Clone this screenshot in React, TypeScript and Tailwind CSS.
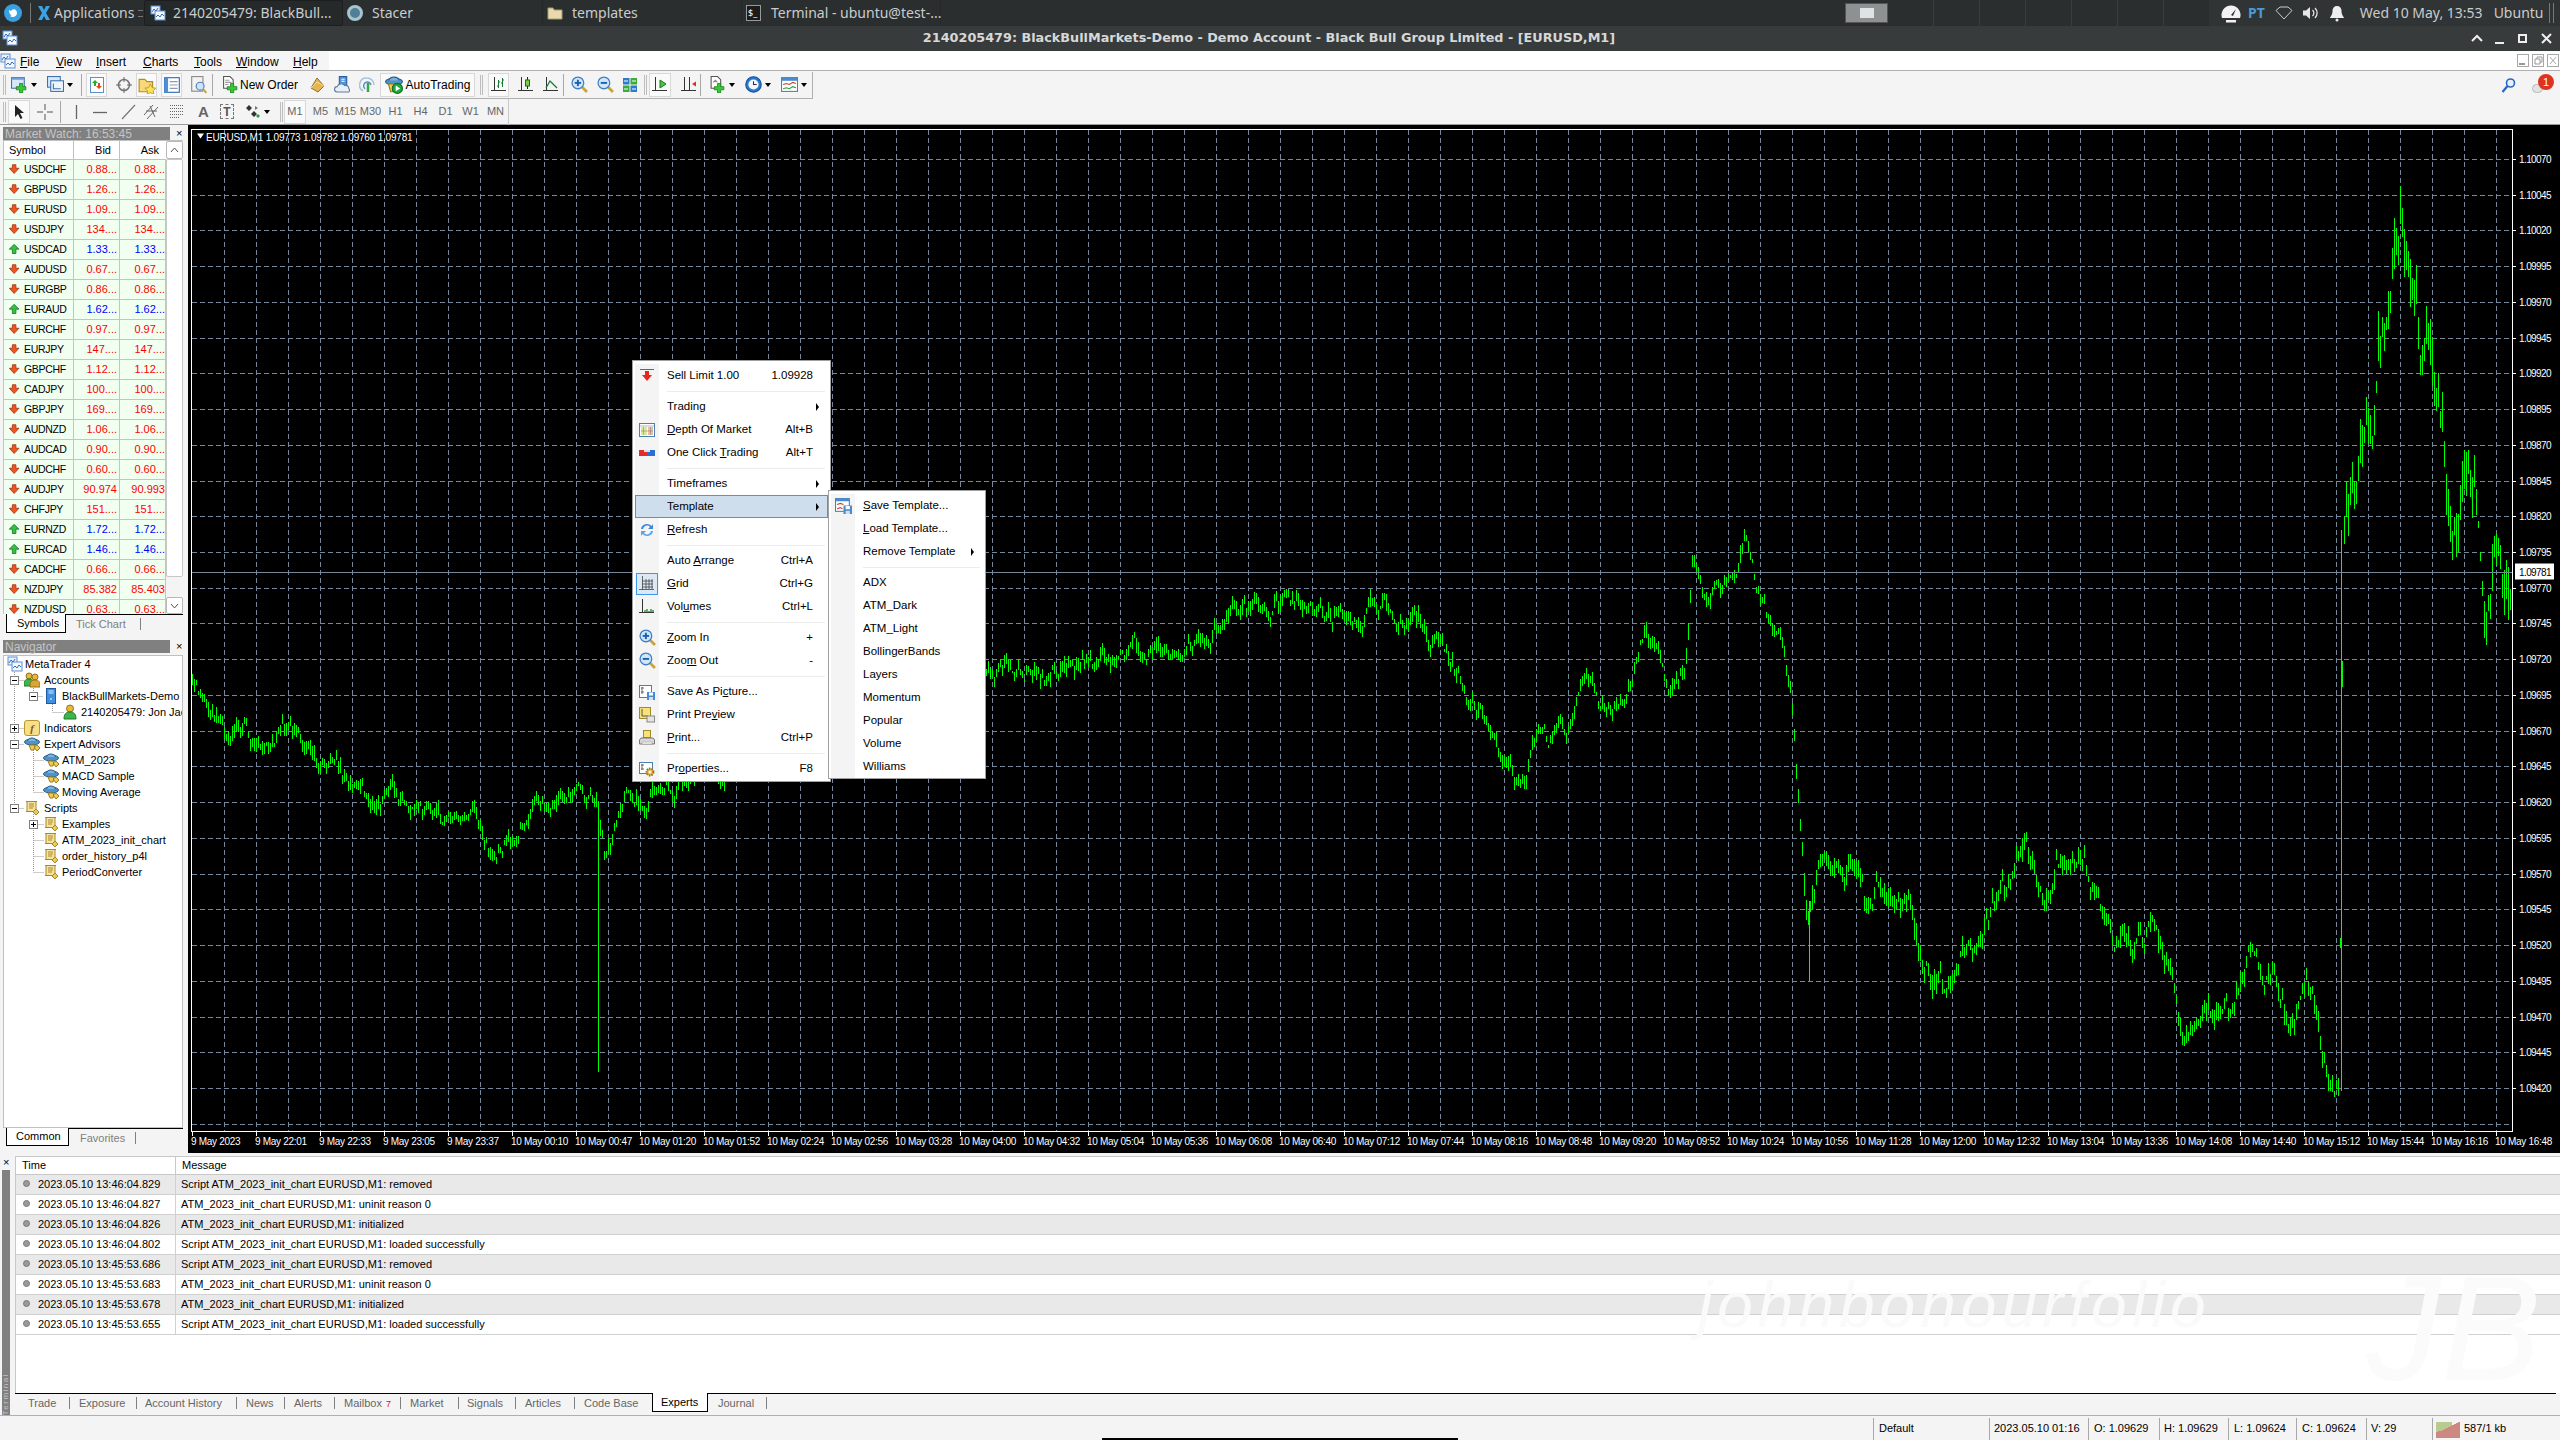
import { ReactNode } from "react";

const Svg = ({ s = 16, children }: { s?: number; children: ReactNode }) => (
  <svg width={s} height={s} viewBox="0 0 16 16" className="block shrink-0">
    {children}
  </svg>
);

const Plus = () => <path d="M8 7h3v3h3v3h-3v3H8v-3H5v-3h3z" fill="#35c935" stroke="#187a18" strokeWidth=".7" />;
const Caret = () => <span className="w-0 h-0 border-x-[3px] border-x-transparent border-t-[4px] border-t-black ml-[3px] shrink-0" />;

const MtIcon = () => (
  <Svg>
    <rect x="1" y="1" width="9" height="8" fill="#e8f1fb" stroke="#5b8fd0" />
    <rect x="5" y="6" width="10" height="9" fill="#f4f8fd" stroke="#5b8fd0" />
    <path d="M2 7l2-3 2 2 2-3M6 12l2-2 2 2 2-3 2 2" fill="none" stroke="#2d6fc0" />
  </Svg>
);
const NewChart = () => (
  <Svg s={17}>
    <rect x=".5" y="1.5" width="12" height="10" fill="#d7e7f8" stroke="#3d70b0" />
    <rect x=".5" y="1.5" width="12" height="2" fill="#6d9fd8" />
    <Plus />
  </Svg>
);
const Profiles = () => (
  <Svg s={17}>
    <rect x=".5" y=".5" width="12" height="10" fill="#d7e7f8" stroke="#3d70b0" />
    <rect x="3.5" y="4.5" width="12" height="10" fill="#eef5fc" stroke="#3d70b0" />
    <path d="M6 7v5h7" fill="none" stroke="#3d70b0" />
  </Svg>
);
const MarketIcon = () => (
  <Svg>
    <rect x="1.5" y=".5" width="13" height="15" fill="#fff" stroke="#5d8fc9" />
    <path d="M5 3l3 3H6v3H4V6H2z" fill="#21b021" transform="translate(1 0)" />
    <path d="M9 6h2v3h2l-3 3-3-3h2z" fill="#e14a1c" />
  </Svg>
);
const DataWin = () => (
  <Svg>
    <circle cx="8" cy="8" r="5.5" fill="none" stroke="#777" strokeWidth="1.6" />
    <path d="M8 0v5M8 11v5M0 8h5M11 8h5" stroke="#666" />
  </Svg>
);
const FolderStar = () => (
  <Svg s={18}>
    <path d="M1 3h5l2 2h5v9H1z" fill="#f8d878" stroke="#b98a25" />
    <path d="M11 7l1.6 3.4 3.4.4-2.5 2.4.7 3.3-3.2-1.7-3 1.7.6-3.3L6 10.800l3.400-.4z" fill="#f9e35c" stroke="#c09a1d" strokeWidth=".8" />
  </Svg>
);
const TermIcon = () => (
  <Svg s={18}>
    <rect x="1.500" y="1.500" width="13" height="13" fill="#fff" stroke="#2e6db8" />
    <rect x="1.500" y="1.500" width="3" height="13" fill="#4c8fdc" />
    <path d="M6 5h7M6 8h7M6 11h7" stroke="#8a9bb2" />
  </Svg>
);
const Tester = () => (
  <Svg s={18}>
    <rect x="1.500" y=".5" width="10" height="13" fill="#f2f2f2" stroke="#8c8c8c" />
    <circle cx="9" cy="9" r="3.500" fill="#cfe4f8" stroke="#4a7fb5" />
    <path d="M11.500 11.500l3 3.500" stroke="#c9a43a" strokeWidth="1.800" />
  </Svg>
);
const OrderDoc = () => (
  <Svg s={17}>
    <path d="M1.500.5h6l3 3v8h-9z" fill="#fff" stroke="#555" />
    <path d="M3 4h4M3 6h6M3 8h3" stroke="#999" />
    <Plus />
  </Svg>
);
const Diamond = () => (
  <Svg>
    <path d="M8 1l7 8-6 6-7-4z" fill="#e6b450" stroke="#96702a" />
    <path d="M2 11l6-6 7 4" fill="none" stroke="#f6dc94" />
  </Svg>
);
const Vps = () => (
  <Svg s={17}>
    <rect x="5" y=".5" width="7" height="10" fill="#4f93dd" stroke="#2d5e9c" />
    <path d="M7 3h3M7 5h3" stroke="#fff" />
    <path d="M3 15a2.500 2.500 0 010-5 4 4 0 017-1 3 3 0 014 3 2 2 0 010 3z" fill="#e7eff7" stroke="#5e7a99" />
  </Svg>
);
const SignalsIcon = () => (
  <Svg>
    <path d="M4 14A7 7 0 018 1a7 7 0 017 7" fill="none" stroke="#a9c3d8" strokeWidth="1.500" />
    <path d="M6 12a4 4 0 012-7 4 4 0 014 3" fill="none" stroke="#4f93c9" strokeWidth="1.500" />
    <path d="M9 6v9" stroke="#3aa63a" strokeWidth="2.500" />
  </Svg>
);
const Hat = ({ s = 16 }: { s?: number }) => (
  <Svg s={s}>
    <ellipse cx="8" cy="6" rx="7.500" ry="3" fill="#4f93c9" stroke="#2b5f8c" />
    <path d="M3.500 5C4 1 12 1 12.500 5" fill="#77b2e0" stroke="#2b5f8c" />
    <path d="M5 9h6l-1 5H7z" fill="#f0cb52" stroke="#9c7d1b" />
    <path d="M10 11l3-2 3 3-3 3z" fill="#f0cb52" stroke="#9c7d1b" />
  </Svg>
);
const AutoIcon = () => (
  <Svg s={18}>
    <ellipse cx="8" cy="5" rx="7.500" ry="3" fill="#4f93c9" stroke="#2b5f8c" />
    <path d="M3.500 4C4 0 12 0 12.500 4" fill="#77b2e0" stroke="#2b5f8c" />
    <path d="M3 7h8v7H5z" fill="#f0cb52" stroke="#9c7d1b" />
    <circle cx="11" cy="11" r="4.500" fill="#20a83a" stroke="#0f6d22" />
    <path d="M9.500 8.500l4 2.500-4 2.500z" fill="#fff" />
  </Svg>
);
const Axes = ({ children, s = 16 }: { children?: ReactNode; s?: number }) => (
  <Svg s={s}>
    <path d="M3.500 0v14M0 13.500h15" stroke="#333" fill="none" />
    {children}
  </Svg>
);
const BarsIc = () => <Axes><path d="M7.500 3v8M6 9h1.500M7.500 5H9M11.500 1v9M10 6h1.500M11.500 3H13" stroke="#167a32" fill="none" /></Axes>;
const CandleIc = () => <Axes><path d="M9.500 0v12" stroke="#222" /><rect x="7.500" y="3" width="4" height="6" fill="#7ad03a" stroke="#1b6b1b" /></Axes>;
const LineIc = () => <Axes><path d="M3 11l4-7 3 3 4 4" stroke="#167a32" fill="none" strokeWidth="1.200" /></Axes>;
const ScrollIc = () => <Axes><path d="M8 3l6 4-6 4z" fill="#3fc93f" stroke="#1b7a1b" /></Axes>;
const ShiftIc = () => <Axes><path d="M8.500 0v14" stroke="#333" /><path d="M15 4.500l-4 2.500 4 2.500z" fill="#d8301c" /></Axes>;
const Mag = ({ minus, plus }: { minus?: boolean; plus?: boolean }) => (
  <Svg s={17}>
    <path d="M9.500 9.500l5.500 5.500" stroke="#c9a43a" strokeWidth="2.600" />
    <circle cx="6.500" cy="6.500" r="5.500" fill="#cfe6fb" stroke="#3f7fc2" strokeWidth="1.200" />
    {(plus || minus) && <path d="M3.500 6.500h6" stroke="#1f5fb0" strokeWidth="1.800" />}
    {plus && <path d="M6.500 3.500v6" stroke="#1f5fb0" strokeWidth="1.800" />}
  </Svg>
);
const Tile = () => (
  <Svg>
    <rect x="1" y="1" width="6.500" height="6.500" fill="#2e7cc9" />
    <rect x="8.500" y="1" width="6.500" height="6.500" fill="#3bac3b" />
    <rect x="1" y="8.500" width="6.500" height="6.500" fill="#3bac3b" />
    <rect x="8.500" y="8.500" width="6.500" height="6.500" fill="#2e7cc9" />
    <path d="M2 4h4M10 4h4M2 12h4M10 12h4" stroke="#fff" />
  </Svg>
);
const AddInd = () => (
  <Svg s={17}>
    <path d="M2 .5h6l3 3v8H2z" fill="#fff" stroke="#555" />
    <path d="M4 6l2-2 2 2" fill="none" stroke="#888" />
    <Plus />
  </Svg>
);
const Clock = () => (
  <Svg s={17}>
    <circle cx="8" cy="8" r="7.300" fill="#2a79d0" stroke="#184f92" />
    <circle cx="8" cy="8" r="4.800" fill="#f4f8fc" />
    <path d="M8 5v3h3" stroke="#333" fill="none" />
  </Svg>
);
const TplIcon = () => (
  <Svg s={17}>
    <rect x=".5" y="1.500" width="15" height="13" fill="#fff" stroke="#4a7fb5" />
    <rect x=".5" y="1.500" width="15" height="3" fill="#4a8ad0" />
    <path d="M2 8l3-1 3 1 3-2 3 1" fill="none" stroke="#c9402a" />
    <path d="M2 12l3-1 3 1 3-2 3 1" fill="none" stroke="#2a9d3a" />
  </Svg>
);
const Cursor = () => (
  <Svg>
    <path d="M4 1v12l3-3 2.500 5 2-1-2.500-5h4z" fill="#222" />
  </Svg>
);
const Cross = () => (
  <Svg>
    <path d="M8 0v6M8 10v6M0 8h6M10 8h6" stroke="#555" />
  </Svg>
);
const VLine = () => <Svg><path d="M8.500 1v14" stroke="#666" strokeWidth="1.300" /></Svg>;
const HLine = () => <Svg><path d="M1 8.500h14" stroke="#666" strokeWidth="1.300" /></Svg>;
const Trend = () => <Svg><path d="M2 15L15 1" stroke="#777" strokeWidth="1.200" /></Svg>;
const Channel = () => (
  <Svg>
    <path d="M0 11L9 1M3 15L14 3M6 2l5 11M2 7h11" stroke="#666" fill="none" />
  </Svg>
);
const Fibo = () => (
  <Svg>
    <path d="M1 1.500h14M1 4.500h14M1 7.500h14M1 10.500h14M1 13.500h10" stroke="#666" strokeDasharray="1 1" />
  </Svg>
);
const Shapes = () => (
  <Svg>
    <path d="M4 1l3 3-3 3-3-3zM9 7l3 3-3 3-3-3z" fill="#333" />
    <path d="M13 10l2 2-2 2-2-2z" fill="#2a9d3a" />
    <path d="M10 2l3 2-3 2z" fill="#777" />
  </Svg>
);
const DownArrow = () => (
  <Svg s={14}>
    <path d="M5 2h4v4h3.500L7 12 1.500 6H5z" fill="#f0551f" stroke="#a8381a" />
  </Svg>
);
const UpArrow = () => (
  <Svg s={14}>
    <path d="M5 12h4V7h3.500L7 1.500 1.500 7H5z" fill="#34c046" stroke="#1c7d2a" />
  </Svg>
);
const SellIc = () => (
  <Svg>
    <path d="M1 1.500h14" stroke="#666" />
    <path d="M6 3h4v4h3l-5 6-5-6h3z" fill="#e8271c" />
  </Svg>
);
const DepthIc = () => (
  <Svg>
    <rect x=".5" y="1.500" width="15" height="13" fill="#fff" stroke="#4a7fb5" />
    <rect x="2" y="5" width="6" height="8" fill="#d9e89a" />
    <rect x="9" y="5" width="5" height="8" fill="#f2b9a8" />
    <path d="M1 4h14M4.500 5v8M11.500 5v8M2 9h12" stroke="#888" strokeWidth=".6" />
  </Svg>
);
const ClickIc = () => (
  <Svg>
    <rect x="0" y="5" width="8" height="6" fill="#e02c2c" />
    <rect x="8" y="5" width="8" height="6" fill="#2c6fd0" />
    <rect x="5" y="5" width="6" height="2" fill="#ddd" />
  </Svg>
);
const RefreshIc = () => (
  <Svg>
    <path d="M2 7a6 5.500 0 0110.500-3L14 2v5H9l2-2A4 4 0 004 7z" fill="#3b8ad8" />
    <path d="M14 9a6 5.500 0 01-10.500 3L2 14V9h5l-2 2a4 4 0 007-2z" fill="#5ba4e6" />
  </Svg>
);
const GridIc = () => (
  <Svg>
    <path d="M3.500 0v14M0 13.500h15M7 3v10M10 3v10M13 3v10M3 5h11M3 8h11M3 11h11" stroke="#444" fill="none" strokeWidth=".8" />
  </Svg>
);
const VolIc = () => <Axes><path d="M6 13v-2M8 13v-3M10 13v-1M12 13v-3M14 13v-2" stroke="#2a9d3a" strokeWidth="1.500" /></Axes>;
const Floppy = () => (
  <g>
    <rect x="8" y="8" width="8" height="8" fill="#4a8ad0" />
    <rect x="10" y="8.500" width="4" height="3" fill="#fff" />
    <rect x="10" y="13" width="4" height="3" fill="#cfe0f2" />
  </g>
);
const SavePicIc = () => (
  <Svg>
    <rect x=".5" y="1.500" width="12" height="12" fill="#fff" stroke="#4a7fb5" />
    <path d="M3 3v7M5 4H2M2 8h3" stroke="#666" />
    <Floppy />
  </Svg>
);
const PreviewIc = () => (
  <Svg>
    <rect x=".5" y=".5" width="11" height="11" fill="#f5e37a" stroke="#a08a2a" />
    <path d="M3 2v7h6" stroke="#555" fill="none" />
    <rect x="8" y="9" width="7.500" height="6" fill="#e4e4e4" stroke="#888" />
  </Svg>
);
const PrintIc = () => (
  <Svg>
    <rect x="4.500" y=".5" width="7" height="7" fill="#f5e37a" stroke="#a08a2a" />
    <path d="M2 8h12l1.500 2v4H.5v-4z" fill="#d8d8d8" stroke="#777" />
    <rect x="3" y="12" width="10" height="2" fill="#f7f7f7" stroke="#999" strokeWidth=".5" />
  </Svg>
);
const PropsIc = () => (
  <Svg>
    <rect x=".5" y="1.500" width="13" height="11" fill="#fff" stroke="#4a7fb5" />
    <path d="M3 3v6M2 4h3M2 8h3" stroke="#666" />
    <circle cx="11" cy="11" r="3.500" fill="#e2b040" stroke="#94701e" strokeWidth="1.800" strokeDasharray="1.500 1" />
    <circle cx="11" cy="11" r="1.500" fill="#fff6d0" />
  </Svg>
);
const SaveTplIc = () => (
  <Svg s={17}>
    <rect x=".5" y="1.500" width="13" height="12" fill="#fff" stroke="#4a7fb5" />
    <rect x=".5" y="1.500" width="13" height="2.500" fill="#4a8ad0" />
    <path d="M2 7l3-1 3 1M2 11l3-1 2 1" fill="none" stroke="#c9402a" />
    <Floppy />
  </Svg>
);
const UserIc = () => (
  <Svg>
    <circle cx="8" cy="4.500" r="3.500" fill="#e8b838" stroke="#94701e" />
    <path d="M2 15c0-5 2-7 6-7s6 2 6 7z" fill="#3eb54a" stroke="#1d7a2a" />
  </Svg>
);
const AccountsIc = () => (
  <Svg>
    <circle cx="5" cy="4" r="3" fill="#e8b838" stroke="#94701e" />
    <path d="M0 14c0-5 1-7 5-7s5 2 5 7z" fill="#3eb54a" stroke="#1d7a2a" />
    <circle cx="11" cy="5" r="3" fill="#e8b838" stroke="#94701e" />
    <path d="M6 15c0-5 1-7 5-7s5 2 5 7z" fill="#d9a62e" stroke="#94701e" />
  </Svg>
);
const ServerIc = () => (
  <Svg>
    <rect x="3.500" y=".5" width="9" height="15" fill="#3f8fe0" stroke="#1f5a9c" />
    <path d="M5.500 3h5M5.500 5h5" stroke="#d8ecff" />
    <circle cx="8" cy="11" r="1" fill="#bfe0ff" />
  </Svg>
);
const IndIc = () => (
  <span className="w-4 h-4 rounded-[3px] bg-[#f7df8a] border border-[#b9952f] flex items-center justify-center text-[11px] italic font-bold text-[#8a5a10] font-['Liberation_Serif',serif] shrink-0">f</span>
);
const ScriptIc = () => (
  <Svg>
    <path d="M3 1.500h9v10H3z" fill="#f6e49a" stroke="#a8882a" />
    <path d="M2 1.500h11M2 11.500h8M5 4h5M5 6h5M5 8h4" stroke="#a8882a" fill="none" />
    <path d="M12 9l3 3-3 3-3-3z" fill="#e8c860" stroke="#a8882a" />
  </Svg>
);

const rows: [string, string, string, boolean][] = [
  ["USDCHF", "0.88...", "0.88...", false],
  ["GBPUSD", "1.26...", "1.26...", false],
  ["EURUSD", "1.09...", "1.09...", false],
  ["USDJPY", "134....", "134....", false],
  ["USDCAD", "1.33...", "1.33...", true],
  ["AUDUSD", "0.67...", "0.67...", false],
  ["EURGBP", "0.86...", "0.86...", false],
  ["EURAUD", "1.62...", "1.62...", true],
  ["EURCHF", "0.97...", "0.97...", false],
  ["EURJPY", "147....", "147....", false],
  ["GBPCHF", "1.12...", "1.12...", false],
  ["CADJPY", "100....", "100....", false],
  ["GBPJPY", "169....", "169....", false],
  ["AUDNZD", "1.06...", "1.06...", false],
  ["AUDCAD", "0.90...", "0.90...", false],
  ["AUDCHF", "0.60...", "0.60...", false],
  ["AUDJPY", "90.974", "90.993", false],
  ["CHFJPY", "151....", "151....", false],
  ["EURNZD", "1.72...", "1.72...", true],
  ["EURCAD", "1.46...", "1.46...", true],
  ["CADCHF", "0.66...", "0.66...", false],
  ["NZDJPY", "85.382", "85.403", false],
  ["NZDUSD", "0.63...", "0.63...", false],
];

// mid price of the chart, read off the reference
const curve: [number, number][] = [
  [192, 678], [207, 694], [229, 727], [253, 743], [278, 727], [310, 751], [335, 767], [359, 800], [392, 795], [433, 812],
  [474, 825], [498, 849], [522, 816], [563, 800], [596, 795], [604, 841], [629, 800], [800, 735], [980, 670], [996, 669],
  [1045, 669], [1094, 653], [1143, 645], [1192, 634], [1225, 620], [1290, 604], [1331, 617], [1380, 601], [1421, 629],
  [1453, 661], [1486, 720], [1500, 766], [1520, 790], [1533, 749], [1565, 741], [1585, 692], [1611, 713], [1643, 639],
  [1669, 684], [1685, 655], [1692, 562], [1708, 606], [1747, 549], [1760, 606], [1780, 647], [1790, 709], [1799, 806],
  [1806, 908], [1825, 868], [1842, 860], [1855, 868], [1864, 904], [1877, 872], [1890, 909], [1910, 896], [1923, 953],
  [1942, 986], [1962, 962], [1988, 913], [2014, 900], [2020, 872], [2050, 888], [2056, 855], [2089, 872], [2102, 925],
  [2112, 941], [2128, 921], [2157, 925], [2177, 1002], [2183, 1023], [2206, 1006], [2229, 1015], [2248, 966], [2264, 990],
  [2274, 962], [2284, 1006], [2307, 982], [2323, 1051], [2330, 1080], [2339, 1072], [2343, 497], [2355, 480], [2360, 430],
  [2367, 357], [2373, 380], [2383, 290], [2393, 215], [2400, 195], [2410, 270], [2420, 370], [2430, 313], [2440, 397],
  [2447, 463], [2453, 530], [2463, 480], [2477, 490], [2483, 590], [2490, 600], [2496, 520], [2503, 540], [2510, 570],
];

function buildBars() {
  let seed = 20230510;
  const rnd = () => {
    seed = (seed * 1664525 + 1013904223) % 4294967296;
    return seed / 4294967296;
  };
  let d = "";
  let i = 0;
  let walk = 0;
  for (let x = 192; x <= 2510; x += 2) {
    while (i < curve.length - 2 && curve[i + 1][0] < x) i++;
    const [x0, y0] = curve[i];
    const [x1, y1] = curve[i + 1];
    const mid = y0 + ((y1 - y0) * (x - x0)) / (x1 - x0);
    const amp = x < 1790 ? 9 : x < 2341 ? 12 : 28;
    walk = walk * 0.82 + (rnd() - 0.5) * amp * 1.9;
    const hi = mid + walk - amp * (0.1 + rnd() * 0.9);
    const lo = mid + walk + amp * (0.1 + rnd() * 0.9);
    d += `M${x + 0.5} ${Math.max(129, hi).toFixed(0)}V${Math.min(1129, lo).toFixed(0)}`;
  }
  d += "M598.500 800V1071M1809.500 900V980M2341.500 529V1090";
  return d;
}
const bars = buildBars();

const hLines = Array.from({ length: 28 }, (_, k) => Math.round(158 + 35.73 * k));
const vLines = Array.from({ length: 72 }, (_, k) => 224 + 32 * k);
const times = [
  "9 May 2023", "9 May 22:01", "9 May 22:33", "9 May 23:05", "9 May 23:37", "10 May 00:10", "10 May 00:47", "10 May 01:20",
  "10 May 01:52", "10 May 02:24", "10 May 02:56", "10 May 03:28", "10 May 04:00", "10 May 04:32", "10 May 05:04", "10 May 05:36",
  "10 May 06:08", "10 May 06:40", "10 May 07:12", "10 May 07:44", "10 May 08:16", "10 May 08:48", "10 May 09:20", "10 May 09:52",
  "10 May 10:24", "10 May 10:56", "10 May 11:28", "10 May 12:00", "10 May 12:32", "10 May 13:04", "10 May 13:36", "10 May 14:08",
  "10 May 14:40", "10 May 15:12", "10 May 15:44", "10 May 16:16", "10 May 16:48",
];

function Chart() {
  return (
    <svg viewBox="188 125 2372 1027" className="block w-full h-full bg-black" fontFamily="'Liberation Sans', sans-serif" fontSize="10" fill="#fff">
      <g stroke="#77889b" strokeDasharray="5 3" shapeRendering="crispEdges">
        {hLines.map((y) => <line key={y} x1="192" x2="2512" y1={y + 0.5} y2={y + 0.5} />)}
        {vLines.map((x) => <line key={x} x1={x + 0.5} x2={x + 0.5} y1="129" y2="1130" />)}
      </g>
      <path d={bars} stroke="#00ff00" strokeWidth="1" fill="none" shapeRendering="crispEdges" />
      <line x1="192" x2="2512" y1="571.500" y2="571.500" stroke="#778899" shapeRendering="crispEdges" />
      <path d="M191.500 128.500H2512.500V1130.500H191.500z" fill="none" stroke="#fff" shapeRendering="crispEdges" />
      <path d="M197 133h7l-3.500 5z" fill="#fff" />
      <text x="206" y="140" letterSpacing="-.2">EURUSD,M1  1.09773 1.09782 1.09760 1.09781</text>
      {hLines.slice(0, 27).map((y, k) => (
        <g key={y}>
          <line x1="2512" x2="2516" y1={y + 0.5} y2={y + 0.5} stroke="#fff" shapeRendering="crispEdges" />
          <text x="2519" y={y + 4} letterSpacing="-.6">{(1.1007 - 0.00025 * k).toFixed(5)}</text>
        </g>
      ))}
      <rect x="2515" y="563" width="39" height="16" fill="#fff" />
      <text x="2519" y="575" fill="#000" letterSpacing="-.6">1.09781</text>
      {times.map((t, k) => (
        <g key={t}>
          <line x1={192.5 + 64 * k} x2={192.5 + 64 * k} y1="1130" y2="1135" stroke="#fff" shapeRendering="crispEdges" />
          <text x={191 + 64 * k} y="1144" letterSpacing="-.3">{t}</text>
        </g>
      ))}
    </svg>
  );
}

function Mi({ label, u, shortcut, icon, sub, active, box }: { label: string; u?: number; shortcut?: string; icon?: ReactNode; sub?: boolean; active?: boolean; box?: boolean }) {
  return (
    <div className={`relative flex items-center h-[23px] ${active ? "bg-[#cfdeec] outline outline-1 -outline-offset-1 outline-[#3b9aef]" : ""}`}>
      <div className={`flex items-center justify-center w-[24px] h-[23px] shrink-0 ${active ? "" : "bg-[#f4f4f4]"}`}>
        <div className={box ? "border border-[#3b9aef] bg-[#dce8f3] p-[2px]" : ""}>{icon}</div>
      </div>
      <span className="pl-[8px] whitespace-pre">
        {u === undefined ? label : <>{label.slice(0, u)}<span className="underline">{label[u]}</span>{label.slice(u + 1)}</>}
      </span>
      {shortcut && <span className="absolute right-[15px]">{shortcut}</span>}
      {sub && <span className="absolute right-[9px] w-0 h-0 border-y-[4px] border-y-transparent border-l-[3px] border-l-black" />}
    </div>
  );
}
const MSep = () => (
  <div className="h-[8px] flex items-center">
    <div className="w-[24px] h-full bg-[#f4f4f4]" />
    <div className="flex-1 ml-[8px] mr-[3px] h-px bg-[#ececec]" />
  </div>
);

function TreeRow({ pl, box, icon, children }: { pl: string; box?: "+" | "-"; icon: ReactNode; children: ReactNode }) {
  return (
    <div className={`flex items-center h-4 whitespace-nowrap ${pl}`}>
      <span className="w-[9px] h-[9px] shrink-0">
        {box && (
          <svg width="9" height="9" viewBox="0 0 9 9" className="block">
            <rect x=".5" y=".5" width="8" height="8" fill="#fff" stroke="#808080" />
            <path d={box === "+" ? "M2 4.500h5M4.500 2v5" : "M2 4.500h5"} stroke="#000" />
          </svg>
        )}
      </span>
      <span className="ml-[5px] shrink-0">{icon}</span>
      <span className="ml-[3px]">{children}</span>
    </div>
  );
}

const tabs: [string, string][] = [
  ["Trade", "w-[55px] pl-[13px]"],
  ["Exposure", "w-[67px] pl-[9px]"],
  ["Account History", "w-[100px] pl-[8px]"],
  ["News", "w-[48px] pl-[9px]"],
  ["Alerts", "w-[50px] pl-[9px]"],
  ["Mailbox", "w-[66px] pl-[9px]"],
  ["Market", "w-[58px] pl-[9px]"],
  ["Signals", "w-[57px] pl-[8px]"],
  ["Articles", "w-[59px] pl-[9px]"],
  ["Code Base", "w-[77px] pl-[9px]"],
];

const logs: [string, string][] = [
  ["2023.05.10 13:46:04.829", "Script ATM_2023_init_chart EURUSD,M1: removed"],
  ["2023.05.10 13:46:04.827", "ATM_2023_init_chart EURUSD,M1: uninit reason 0"],
  ["2023.05.10 13:46:04.826", "ATM_2023_init_chart EURUSD,M1: initialized"],
  ["2023.05.10 13:46:04.802", "Script ATM_2023_init_chart EURUSD,M1: loaded successfully"],
  ["2023.05.10 13:45:53.686", "Script ATM_2023_init_chart EURUSD,M1: removed"],
  ["2023.05.10 13:45:53.683", "ATM_2023_init_chart EURUSD,M1: uninit reason 0"],
  ["2023.05.10 13:45:53.678", "ATM_2023_init_chart EURUSD,M1: initialized"],
  ["2023.05.10 13:45:53.655", "Script ATM_2023_init_chart EURUSD,M1: loaded successfully"],
];

const Pressed = ({ className, children }: { className: string; children: ReactNode }) => (
  <div className={`h-[24px] flex items-center justify-center bg-[#fafafa] border border-[#d8d8d8] shrink-0 ${className}`}>{children}</div>
);
const Slot = ({ className, children }: { className: string; children: ReactNode }) => (
  <div className={`h-[24px] flex items-center shrink-0 ${className}`}>{children}</div>
);
const Sep = ({ className }: { className: string }) => <div className={`w-px h-[22px] bg-[#a8a8a8] shrink-0 ${className}`} />;
const Grip = ({ className }: { className: string }) => <div className={`w-[3px] h-[20px] border-x border-[#bdbdbd] shrink-0 ${className}`} />;

const menuUnderlines = [
  ["File", "w-[36px]"],
  ["View", "w-[40px]"],
  ["Insert", "w-[47px]"],
  ["Charts", "w-[51px]"],
  ["Tools", "w-[42px]"],
  ["Window", "w-[57px]"],
  ["Help", "w-[35px]"],
];

const statusCells: [string, string][] = [
  ["Default", "w-[116px] pl-[5px]"],
  ["2023.05.10 01:16", "w-[99px] pl-[4px]"],
  ["O: 1.09629", "w-[71px] pl-[5px]"],
  ["H: 1.09629", "w-[69px] pl-[4px]"],
  ["L: 1.09624", "w-[68px] pl-[5px]"],
  ["C: 1.09624", "w-[70px] pl-[5px]"],
  ["V: 29", "w-[66px] pl-[4px]"],
];

export default function App() {
  return (
    <div className="relative w-[2560px] h-[1440px] overflow-hidden flex flex-col bg-[#f4f4f4] text-black text-[11px] leading-none font-['Liberation_Sans',sans-serif]">
      {/* desktop panel */}
      <div className="h-[26px] bg-[#2b2e2f] flex items-center text-[14px] text-[#c9cccc] shrink-0 font-['Noto_Sans',sans-serif]">
        <svg width="18" height="18" viewBox="0 0 18 18" className="ml-[4px] shrink-0">
          <circle cx="9" cy="9" r="9" fill="#3aa0e0" />
          <path d="M5 6l2 1c2-3 6-2 6 2s-5 5-7 3l2-1c-2 0-3-2-3-5z" fill="#fff" />
        </svg>
        <div className="w-px h-[20px] bg-[#777] ml-[8px] shrink-0" />
        <svg width="14" height="16" viewBox="0 0 14 16" className="ml-[6px] shrink-0">
          <path d="M1 1l4 0 2 4 2-4 4 0-4 7 4 7-4 0-2-4-2 4-4 0 4-7z" fill="#39a3e6" />
        </svg>
        <span className="ml-[3px] w-[84px]">Applications</span>
        <span className="w-[5px] h-[7px] border-y border-[#777] shrink-0" />
        <div className="ml-[1px] w-[199px] h-[26px] bg-[#26292a] border border-[#1c1e1f] rounded-[2px] flex items-center">
          <span className="ml-[5px]"><MtIcon /></span>
          <span className="ml-[7px] whitespace-nowrap">2140205479: BlackBull...</span>
        </div>
        <div className="w-[200px] h-[26px] border-r border-[#262829] flex items-center">
          <span className="ml-[4px] w-4 h-4 rounded-full bg-[#4f7f96] border-[3px] border-[#a9c4cf] shrink-0" />
          <span className="ml-[9px]">Stacer</span>
        </div>
        <div className="w-[199px] h-[26px] border-r border-[#262829] flex items-center">
          <svg width="16" height="16" viewBox="0 0 16 16" className="ml-[4px] shrink-0">
            <path d="M1 3h5l1 2h8v9H1z" fill="#e8d9ae" stroke="#a89a70" />
          </svg>
          <span className="ml-[9px]">templates</span>
        </div>
        <div className="w-[199px] h-[26px] border-r border-[#262829] flex items-center">
          <span className="ml-[4px] w-[15px] h-[16px] bg-[#1b1b1b] border border-[#999] text-[9px] text-white leading-[13px] pl-px shrink-0">$_</span>
          <span className="ml-[10px] whitespace-nowrap">Terminal - ubuntu@test-...</span>
        </div>
        <div className="ml-[904px] w-[43px] h-[20px] bg-[#8e9192] border border-[#555] flex items-center justify-center shrink-0">
          <div className="w-[14px] h-[10px] bg-[#dfe3e6]" />
        </div>
        <div className="w-[321px] h-[26px] shrink-0 flex">
          {[0, 1, 2, 3, 4, 5].map((k) => <div key={k} className="w-[46px] h-[26px] border-r border-[#3a3d3e]" />)}
        </div>
        <div className="flex-1 h-[26px] bg-[#303435] flex items-center">
          <svg width="22" height="22" viewBox="0 0 22 22" className="ml-[11px] shrink-0">
            <path d="M2 16A9.500 9.500 0 1120 16z" fill="#f2f2f2" />
            <path d="M11 13l5-6-3 7z" fill="#303435" />
            <rect x="6" y="18" width="10" height="2.500" fill="#f2f2f2" />
          </svg>
          <span className="ml-[6px] font-bold text-[#4a9ad8]">PT</span>
          <svg width="18" height="14" viewBox="0 0 18 14" className="ml-[10px] shrink-0">
            <path d="M1 4.500L5 1h8l4 3.500L9 13z" fill="none" stroke="#c9cccc" />
          </svg>
          <svg width="17" height="16" viewBox="0 0 17 16" className="ml-[9px] shrink-0">
            <path d="M1 5.500h3L8 2v12l-4-3.500H1z" fill="#e6e6e6" />
            <path d="M10.500 5a4 4 0 010 6M13 3a7 7 0 010 10" fill="none" stroke="#e6e6e6" strokeWidth="1.300" />
          </svg>
          <svg width="14" height="17" viewBox="0 0 14 17" className="ml-[11px] shrink-0">
            <path d="M7 1a4.500 4.500 0 014.500 5c0 4 2.500 6 2.500 7H0c0-1 2.500-3 2.500-7A4.500 4.500 0 017 1z" fill="#eee" />
            <circle cx="7" cy="15" r="1.500" fill="#eee" />
          </svg>
          <span className="ml-[16px] whitespace-nowrap">Wed 10 May, 13:53</span>
          <span className="ml-[11px]">Ubuntu</span>
          <div className="ml-[5px] w-[5px] h-[20px] border-x border-[#777]" />
        </div>
      </div>

      {/* window title */}
      <div className="relative h-[25px] bg-[#383b3c] flex items-center justify-center pr-[22px] shrink-0 text-[12.800px] font-bold text-[#d6d8d8] font-['DejaVu_Sans',sans-serif]">
        <span className="absolute left-[2px] top-[4px]"><MtIcon /></span>
        <span className="whitespace-nowrap">2140205479: BlackBullMarkets-Demo - Demo Account - Black Bull Group Limited - [EURUSD,M1]</span>
        <svg width="90" height="14" viewBox="0 0 90 14" className="absolute right-[2px] top-[6px]">
          <path d="M4 9l5-5 5 5" fill="none" stroke="#eee" strokeWidth="2" />
          <path d="M27 11h9" stroke="#eee" strokeWidth="2" />
          <rect x="51" y="3" width="7" height="7" fill="none" stroke="#eee" strokeWidth="2" />
          <path d="M74 2l9 9M83 2l-9 9" stroke="#eee" strokeWidth="2" />
        </svg>
      </div>

      {/* menu bar */}
      <div className="h-[20px] bg-white border-b border-[#b0b0b0] flex items-center shrink-0">
        <div className="w-[329px] h-[19px] bg-[#f5f5f5] flex items-center">
          <span className="w-[20px]"><MtIcon /></span>
          {menuUnderlines.map(([m, w]) => (
            <span key={m} className={`text-[12px] pt-[2px] ${w}`}><span className="underline">{m[0]}</span>{m.slice(1)}</span>
          ))}
        </div>
        <div className="ml-auto flex mr-[1px] gap-[3px] text-[#8c8c8c]">
          {["min", "max", "close"].map((k) => (
            <svg key={k} width="12" height="13" viewBox="0 0 12 13" className="block">
              <rect x=".5" y=".5" width="11" height="12" fill="#fff" stroke="#a8a8a8" />
              {k === "min" && <path d="M2 10h6" stroke="#999" strokeWidth="2" />}
              {k === "max" && <path d="M3 5h5v5H3zM5 5V3h5v5H8" fill="none" stroke="#999" />}
              {k === "close" && <path d="M3 3l6 7M9 3l-6 7" stroke="#aaa" />}
            </svg>
          ))}
        </div>
      </div>

      {/* main toolbar */}
      <div className="relative h-[27px] flex items-center shrink-0 pt-px">
        <div className="flex items-center w-[813px] h-[27px] border-r border-b border-[#b0b0b0]">
          <Grip className="ml-[3px] -mr-[6px]" />
          <Slot className="ml-[11px] w-[27px]"><NewChart /><Caret /></Slot>
          <Slot className="ml-[9px] w-[27px]"><Profiles /><Caret /></Slot>
          <Sep className="ml-[7px]" />
          <Pressed className="ml-[4px] w-[21px]"><MarketIcon /></Pressed>
          <Slot className="ml-[9px] w-[16px]"><DataWin /></Slot>
          <Pressed className="ml-[4px] w-[21px]"><FolderStar /></Pressed>
          <Pressed className="ml-[4px] w-[21px]"><TermIcon /></Pressed>
          <Slot className="ml-[8px] w-[18px]"><Tester /></Slot>
          <Sep className="ml-[4px]" />
          <Slot className="ml-[9px] w-[70px] text-[12px] whitespace-nowrap"><OrderDoc /><span className="ml-px">New Order</span></Slot>
          <Slot className="ml-[17px] w-[16px]"><Diamond /></Slot>
          <Slot className="ml-[9px] w-[17px]"><Vps /></Slot>
          <Slot className="ml-[8px] w-[16px]"><SignalsIcon /></Slot>
          <Pressed className="ml-[5px] w-[95px] text-[12px] whitespace-nowrap"><AutoIcon /><span className="ml-[3px]">AutoTrading</span></Pressed>
          <Grip className="ml-[5px]" />
          <Pressed className="ml-[5px] w-[21px]"><BarsIc /></Pressed>
          <Slot className="ml-[9px] w-[15px]"><CandleIc /></Slot>
          <Slot className="ml-[10px] w-[14px]"><LineIc /></Slot>
          <Sep className="ml-[6px]" />
          <Slot className="ml-[7px] w-[17px]"><Mag plus /></Slot>
          <Slot className="ml-[9px] w-[16px]"><Mag minus /></Slot>
          <Slot className="ml-[9px] w-[16px]"><Tile /></Slot>
          <Grip className="ml-[6px]" />
          <Pressed className="ml-[2px] w-[22px]"><ScrollIc /></Pressed>
          <Slot className="ml-[10px] w-[14px]"><ShiftIc /></Slot>
          <Sep className="ml-[5px]" />
          <Slot className="ml-[8px] w-[27px]"><AddInd /><Caret /></Slot>
          <Slot className="ml-[9px] w-[27px]"><Clock /><Caret /></Slot>
          <Slot className="ml-[9px] w-[27px]"><TplIcon /><Caret /></Slot>
        </div>
        <div className="ml-auto flex items-center mr-[6px] gap-[16px]">
          <svg width="15" height="15" viewBox="0 0 15 15">
            <circle cx="9.500" cy="5" r="4" fill="#e6f0fb" stroke="#2a66c4" strokeWidth="1.600" />
            <path d="M6.500 8L1.500 14" stroke="#2a66c4" strokeWidth="2.200" />
          </svg>
          <div className="relative w-[22px] h-[22px]">
            <span className="absolute left-0 bottom-[3px] w-[11px] h-[9px] rounded-full bg-[#e2e2e2] border border-[#bbb]" />
            <span className="absolute right-0 top-0 w-[16px] h-[16px] rounded-full bg-[#dc3420] text-white text-[11px] flex items-center justify-center">1</span>
          </div>
        </div>
      </div>

      {/* drawing toolbar */}
      <div className="h-[27px] flex items-center shrink-0 border-b border-[#9c9c9c] pt-px">
        <div className="flex items-center w-[509px] h-[26px] border-r border-[#c8c8c8]">
          <Grip className="ml-[3px] -mr-[6px]" />
          <Pressed className="ml-[8px] w-[22px]"><Cursor /></Pressed>
          <Slot className="ml-[7px] w-[16px]"><Cross /></Slot>
          <Sep className="ml-[7px]" />
          <Slot className="ml-[7px] w-[16px]"><VLine /></Slot>
          <Slot className="ml-[8px] w-[16px]"><HLine /></Slot>
          <Slot className="ml-[12px] w-[16px]"><Trend /></Slot>
          <Slot className="ml-[8px] w-[16px]"><Channel /></Slot>
          <Slot className="ml-[9px] w-[16px]"><Fibo /></Slot>
          <Slot className="ml-[13px] w-[10px] text-[15px] text-[#666] font-bold">A</Slot>
          <Slot className="ml-[12px] w-[14px]">
            <span className="w-[14px] h-[15px] border border-dashed border-[#777] text-[12px] text-[#555] font-bold flex items-center justify-center">T</span>
          </Slot>
          <Slot className="ml-[11px] w-[24px]"><Shapes /><Caret /></Slot>
          <Grip className="ml-[11px]" />
          <Pressed className="ml-[1px] w-[22px] text-[#666]">M1</Pressed>
          <span className="w-[2px] shrink-0" />
          {[["M5", "w-[25px]"], ["M15", "w-[25px]"], ["M30", "w-[25px]"], ["H1", "w-[25px]"], ["H4", "w-[25px]"], ["D1", "w-[25px]"], ["W1", "w-[25px]"], ["MN", "w-[25px]"]].map(([t, w]) => (
            <span key={t} className={`text-center text-[#666] shrink-0 ${w}`}>{t}</span>
          ))}
        </div>
      </div>

      {/* sidebar + chart */}
      <div className="h-[1028px] flex shrink-0">
        <div className="w-[188px] shrink-0 flex flex-col pl-[3px] pr-[5px] bg-[#f4f4f4]">
          <div className="h-[13px] mt-[2px] flex items-center shrink-0">
            <div className="w-[167px] h-[13px] bg-[#808080] text-[#c4c4c4] text-[12px] flex items-center pl-[2px] whitespace-nowrap">Market Watch: 16:53:45</div>
            <span className="ml-[6px] text-[11px]">×</span>
          </div>
          <div className="h-[474px] shrink-0 flex overflow-hidden bg-white border-t border-[#c0c0c0]">
            <div className="w-[163px] shrink-0">
              <div className="h-[19px] grid grid-cols-[70px_46px_47px] items-center border-b border-l border-[#c0c0c0]">
                <span className="pl-[5px] border-r border-[#c0c0c0] h-[18px] flex items-center">Symbol</span>
                <span className="pr-[8px] border-r border-[#c0c0c0] h-[18px] flex items-center justify-end">Bid</span>
                <span className="pr-[8px] h-[18px] flex items-center justify-end">Ask</span>
              </div>
              {rows.map(([sym, bid, ask, up]) => (
                <div key={sym} className="h-[20px] grid grid-cols-[70px_46px_47px] items-center bg-[#f0fff0] border-b border-l border-r border-[#c4c4c4]">
                  <span className="flex items-center border-r border-[#c4c4c4] h-[19px] text-[10.500px] tracking-[-0.3px]">
                    <span className="ml-[4px] mr-[2px]">{up ? <UpArrow /> : <DownArrow />}</span>{sym}
                  </span>
                  <span className={`border-r border-[#c4c4c4] h-[19px] flex items-center justify-end pr-[2px] ${up ? "text-[#0000ff]" : "text-[#ff0000]"}`}>{bid}</span>
                  <span className={`flex items-center justify-end pr-[2px] ${up ? "text-[#0000ff]" : "text-[#ff0000]"}`}>{ask}</span>
                </div>
              ))}
            </div>
            <div className="w-[17px] shrink-0 flex flex-col bg-[#f4f4f4]">
              <div className="h-[18px] border border-[#b8b8b8] rounded-[2px] bg-white flex items-center justify-center">
                <svg width="9" height="6" viewBox="0 0 9 6"><path d="M1 5l3.500-4L8 5" fill="none" stroke="#555" /></svg>
              </div>
              <div className="h-[418px] bg-white border border-[#c8c8c8] rounded-[2px]" />
              <div className="mt-auto h-[17px] border border-[#b8b8b8] rounded-[2px] bg-white flex items-center justify-center">
                <svg width="9" height="6" viewBox="0 0 9 6"><path d="M1 1l3.500 4L8 1" fill="none" stroke="#555" /></svg>
              </div>
            </div>
          </div>
          <div className="h-[21px] shrink-0 flex">
            <div className="ml-[3px] w-[60px] h-[19px] bg-white border-x border-b border-black flex items-center pl-[10px]">Symbols</div>
            <div className="flex-1 border-t border-black flex items-start">
              <span className="ml-[10px] mt-[4px] text-[#808080]">Tick Chart</span>
              <span className="ml-[14px] mt-[3px] w-px h-[12px] bg-[#808080]" />
            </div>
          </div>
          <div className="h-[13px] mt-[5px] flex items-center shrink-0">
            <div className="w-[167px] h-[13px] bg-[#808080] text-[#c4c4c4] text-[12px] flex items-center pl-[2px]">Navigator</div>
            <span className="ml-[6px] text-[11px]">×</span>
          </div>
          <div className="relative h-[473px] mt-[2px] shrink-0 bg-white border border-[#c0c0c0] overflow-hidden">
            <svg width="100" height="240" viewBox="0 0 100 240" className="absolute left-0 top-0" stroke="#999" strokeDasharray="1 1" fill="none">
              <path d="M10.500 16v136M10.500 24.500h10M10.500 72.500h10M10.500 88.500h10M10.500 152.500h10M29.500 24v16M29.500 40.500H39M48.500 40v16M48.500 56.500H60M29.500 88v48M29.500 104.500H40M29.500 120.500H40M29.500 136.500H40M29.500 152v64M29.500 168.500H40M29.500 184.500H40M29.500 200.500H40M29.500 216.500H40" />
            </svg>
            <div className="relative">
              <div className="flex items-center h-4 pl-[3px]"><MtIcon /><span className="ml-[2px]">MetaTrader 4</span></div>
              <TreeRow pl="pl-[6px]" box="-" icon={<AccountsIc />}><span className="ml-[1px]">Accounts</span></TreeRow>
              <TreeRow pl="pl-[25px]" box="-" icon={<ServerIc />}>BlackBullMarkets-Demo</TreeRow>
              <TreeRow pl="pl-[44px]" icon={<UserIc />}>2140205479: Jon Jac</TreeRow>
              <TreeRow pl="pl-[6px]" box="+" icon={<IndIc />}><span className="ml-[1px]">Indicators</span></TreeRow>
              <TreeRow pl="pl-[6px]" box="-" icon={<Hat />}><span className="ml-[1px]">Expert Advisors</span></TreeRow>
              <TreeRow pl="pl-[25px]" icon={<Hat />}>ATM_2023</TreeRow>
              <TreeRow pl="pl-[25px]" icon={<Hat />}>MACD Sample</TreeRow>
              <TreeRow pl="pl-[25px]" icon={<Hat />}>Moving Average</TreeRow>
              <TreeRow pl="pl-[6px]" box="-" icon={<ScriptIc />}><span className="ml-[1px]">Scripts</span></TreeRow>
              <TreeRow pl="pl-[25px]" box="+" icon={<ScriptIc />}>Examples</TreeRow>
              <TreeRow pl="pl-[25px]" icon={<ScriptIc />}>ATM_2023_init_chart</TreeRow>
              <TreeRow pl="pl-[25px]" icon={<ScriptIc />}>order_history_p4l</TreeRow>
              <TreeRow pl="pl-[25px]" icon={<ScriptIc />}>PeriodConverter</TreeRow>
            </div>
          </div>
          <div className="h-[20px] shrink-0 flex">
            <div className="ml-[3px] w-[63px] h-[18px] bg-white border-x border-b border-black flex items-center pl-[9px]">Common</div>
            <div className="flex-1 border-t border-black flex items-start">
              <span className="ml-[11px] mt-[4px] text-[#808080]">Favorites</span>
              <span className="ml-[10px] mt-[3px] w-px h-[12px] bg-[#808080]" />
            </div>
          </div>
        </div>
        <div className="flex-1 min-w-0"><Chart /></div>
      </div>

      {/* terminal */}
      <div className="relative h-[263px] shrink-0 flex pt-[3px] border-b border-[#b0b0b0] overflow-hidden">
        <span className="absolute left-[1698px] top-[120px] text-[64px] leading-none italic tracking-[5px] text-[#fafafa] whitespace-nowrap z-10">johnbonourfolio</span>
        <span className="absolute left-[2366px] top-[100px] text-[150px] leading-none italic text-[#fbfbfb] z-10">JB</span>
        <div className="w-[15px] shrink-0 flex flex-col">
          <span className="h-[14px] pl-[3px] pt-px text-[11px]">×</span>
          <div className="ml-[2px] w-[8px] flex-1 bg-[#808080] flex items-end">
            <span className="text-[8px] tracking-[1.500px] text-[#c4c4c4] [writing-mode:vertical-rl] rotate-180 leading-[8px]">Terminal</span>
          </div>
        </div>
        <div className="flex-1 min-w-0 flex flex-col">
          <div className="flex-1 bg-white border-l border-t border-[#c8c8c8]">
            <div className="h-[18px] flex items-center border-b border-[#c8c8c8]">
              <span className="w-[160px] pl-[6px] h-full flex items-center border-r border-[#c8c8c8]">Time</span>
              <span className="pl-[6px]">Message</span>
            </div>
            {logs.map(([t, m], i) => (
              <div key={t} className={`h-[20px] flex items-center border-b border-[#d0d0d0] whitespace-nowrap ${i % 2 === 0 ? "bg-[#e9e9e9]" : "bg-white"}`}>
                <span className="w-[160px] h-[19px] flex items-center border-r border-[#d0d0d0]">
                  <span className="ml-[7px] w-[7px] h-[7px] rounded-full bg-[#9a9a9a] border border-[#777] -mt-[3px] shrink-0" />
                  <span className="ml-[8px]">{t}</span>
                </span>
                <span className="pl-[5px]">{m}</span>
              </div>
            ))}
          </div>
          <div className="h-[22px] flex shrink-0 mr-[4px]">
            {tabs.map(([t, c]) => (
              <div key={t} className={`h-[19px] border-t border-black flex items-center shrink-0 text-[#666] ${c}`}>
                <span className="flex-1 whitespace-nowrap">
                  {t}
                  {t === "Mailbox" && <span className="ml-[4px] text-[9px] text-[#ff0000]">7</span>}
                </span>
                {t !== "Code Base" && <span className="w-px h-[12px] bg-[#808080]" />}
              </div>
            ))}
            <div className="w-[56px] h-[19px] bg-white border-x border-b border-black flex items-center pl-[8px] shrink-0">Experts</div>
            <div className="w-[59px] h-[19px] border-t border-black flex items-center pl-[10px] text-[#666] shrink-0">
              <span className="flex-1">Journal</span>
              <span className="w-px h-[12px] bg-[#808080]" />
            </div>
            <div className="flex-1 border-t border-black h-[19px]" />
          </div>
        </div>
      </div>

      {/* status bar */}
      <div className="flex-1 flex justify-end items-center whitespace-nowrap pt-px">
        {statusCells.map(([t, c]) => (
          <span key={t} className={`h-[22px] flex items-center border-l border-[#a8a8a8] shrink-0 ${c}`}>{t}</span>
        ))}
        <span className="w-[128px] h-[22px] flex items-center border-l border-[#a8a8a8] shrink-0 pl-[3px]">
          <svg width="24" height="20" viewBox="0 0 24 20" className="shrink-0">
            <path d="M1 19v-6M3 19v-7M5 19v-7M7 19v-8M9 19v-9M11 19v-10M13 19v-11M15 19v-12M17 19v-13M19 19v-14M21 19v-15M23 19v-16" stroke="#a81c10" />
            <path d="M1 13v-10M3 12v-9M5 12v-9M7 11v-8M9 10v-7M11 9v-6M13 8v-5M15 7v-4" stroke="#7aa428" />
          </svg>
          <span className="ml-[4px]">587/1 kb</span>
        </span>
      </div>
      <div className="absolute left-[1102px] bottom-0 w-[356px] h-[2px] bg-black" />

      {/* context menu */}
      <div className="absolute left-[632px] top-[360px] w-[199px] h-[422px] bg-white border border-[#a0a0a0] py-[3px] px-[2px] text-[11.500px]">
        <Mi label="Sell Limit 1.00" shortcut="1.09928" icon={<SellIc />} />
        <MSep />
        <Mi label="Trading" sub />
        <Mi label="Depth Of Market" u={0} shortcut="Alt+B" icon={<DepthIc />} />
        <Mi label="One Click Trading" u={10} shortcut="Alt+T" icon={<ClickIc />} />
        <MSep />
        <Mi label="Timeframes" sub />
        <Mi label="Template" sub active />
        <Mi label="Refresh" u={0} icon={<RefreshIc />} />
        <MSep />
        <Mi label="Auto Arrange" u={5} shortcut="Ctrl+A" />
        <Mi label="Grid" u={0} shortcut="Ctrl+G" icon={<GridIc />} box />
        <Mi label="Volumes" u={3} shortcut="Ctrl+L" icon={<VolIc />} />
        <MSep />
        <Mi label="Zoom In" u={0} shortcut="+" icon={<Mag plus />} />
        <Mi label="Zoom Out" u={3} shortcut="-" icon={<Mag minus />} />
        <MSep />
        <Mi label="Save As Picture..." u={10} icon={<SavePicIc />} />
        <Mi label="Print Preview" u={9} icon={<PreviewIc />} />
        <Mi label="Print..." u={0} shortcut="Ctrl+P" icon={<PrintIc />} />
        <MSep />
        <Mi label="Properties..." u={2} shortcut="F8" icon={<PropsIc />} />
      </div>
      <div className="absolute left-[828px] top-[490px] w-[158px] h-[289px] bg-white border border-[#a0a0a0] py-[3px] px-[2px] text-[11.500px]">
        <Mi label="Save Template..." u={0} icon={<SaveTplIc />} />
        <Mi label="Load Template..." u={0} />
        <Mi label="Remove Template" sub />
        <MSep />
        {["ADX", "ATM_Dark", "ATM_Light", "BollingerBands", "Layers", "Momentum", "Popular", "Volume", "Williams"].map((t) => (
          <Mi key={t} label={t} />
        ))}
      </div>
    </div>
  );
}
